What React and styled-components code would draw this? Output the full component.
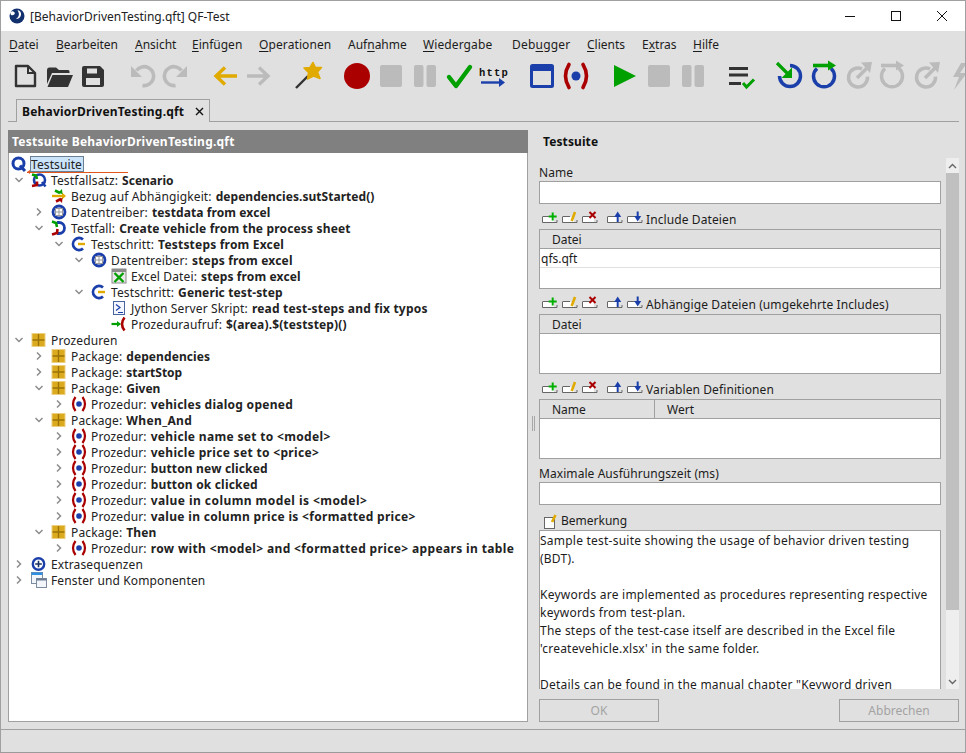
import React from 'react';
import styled, { createGlobalStyle } from 'styled-components';

const Global = createGlobalStyle`
  html, body { margin: 0; padding: 0; background: #e0e0e0; }
  body { font-family: "Noto Sans", "Open Sans", sans-serif; font-size: 12px; color: #1c1c1c; }
  * { box-sizing: border-box; }
`;

const BLUE = '#1a3faa';
const RED = '#aa0000';
const GREEN = '#00a000';
const GOLD = '#e0aa00';
const GRAY = '#bbbbbb';
const DARK = '#333333';

const Win = styled.div`
  position: relative; width: 966px; height: 753px; overflow: hidden; display: flex; flex-direction: column;
  background: #e0e0e0; border: 1px solid #a0a0a0; border-bottom-color: #9a9a9a;
`;
const TitleBar = styled.div`height: 30px; background: #fff; display: flex; align-items: center; padding-left: 8px; flex: none;`;
const TitleText = styled.div`margin-left: 5px; font-size: 12px; color: #222; flex: 1;`;
const WinBtn = styled.div`width: 46px; height: 30px; display: flex; align-items: center; justify-content: center;`;
const MenuBar = styled.div`height: 27px; display: flex; align-items: center; padding-left: 8px; flex: none;`;
const MenuItem = styled.div`
  width: ${p => p.$w}px; line-height: 18px; color: #1c1c1c; flex: none; white-space: nowrap; letter-spacing: ${p => p.$sp || 0}px;
  u { text-underline-offset: 2px; }
`;
const ToolBar = styled.div`height: 39px; display: flex; padding-left: 7px; flex: none; overflow: hidden;`;
const ToolSlot = styled.div`width: 34px; height: 39px; flex: none; svg { display: block; }`;
const ToolGap = styled.div`width: ${p => p.$w || 15}px; flex: none;`;
const TabStrip = styled.div`
  height: 23px; margin: 2px 6px 0 7px; padding-left: 8px; display: flex; flex: none; border-bottom: 1px solid #a0a0a0;
`;
const Tab = styled.div`
  width: 194px; height: 23px; border: 1px solid #a0a0a0; border-bottom: none; padding: 0 5px; display: flex; align-items: center;
  justify-content: space-between; font-weight: 700; color: #111; background: #e0e0e0; letter-spacing: 0.2px;
`;
const Content = styled.div`flex: 1; display: flex; padding: 8px 6px 0 7px; min-height: 0;`;
const LeftPanel = styled.div`width: 520px; height: 592px; display: flex; flex-direction: column; border: 1px solid #a0a0a0; background: #fff; flex: none;`;
const PanelHead = styled.div`
  height: 23px; background: #808080; color: #fff; font-weight: 700; display: flex; align-items: center; padding-left: 4px; margin: -1px -1px 0; flex: none; letter-spacing: 0.23px;
`;
const Tree = styled.div`position: relative; padding-top: 3px; flex: 1;`;
const Row = styled.div`
  height: 16px; display: flex; align-items: center; white-space: nowrap; color: #222; letter-spacing: 0.13px;
  padding-left: ${p => (p.$level === 0 ? 2 : (p.$level - 1) * 20)}px;
`;
const Bold = styled.b`font-weight: 700; margin-left: 4px; letter-spacing: ${p => p.$sp}px;`;
const Twisty = styled.div`width: 22px; height: 16px; flex: none; display: flex; align-items: center; justify-content: center; padding-right: 2px;`;
const NodeIcon = styled.div`width: 16px; height: 16px; flex: none; margin-right: 4px; svg { display: block; }`;
const Selected = styled.span`
  background: #cbe4fa; border: 1px solid #6b7f93; line-height: 15px; height: 16px; padding: 0 1px 0 0; margin-left: -1px; display: inline-block; letter-spacing: 0.1px;
`;
const DropMark = styled.div`
  position: absolute; left: 18px; top: 19px; width: 101px; height: 1px; background: #e0561c;
  &::before { content: ''; position: absolute; left: 0; top: -2px; border: 2.5px solid transparent; border-right: 3px solid #e0561c; border-left: none; }
`;
const Splitter = styled.div`width: 11px; flex: none; display: flex; align-items: center; justify-content: center; gap: 1px; padding-bottom: 14px;`;
const Grip = styled.div`width: 1px; height: 15px; background: #a8a8a8; margin-top: 1px;`;
const RightPanel = styled.div`width: 420px; flex: none; display: flex; flex-direction: column; height: 592px;`;
const RightHead = styled.div`height: 23px; padding-left: 4px; display: flex; align-items: center; font-weight: 700; color: #111; flex: none; letter-spacing: 0.1px;`;
const Scroller = styled.div`height: 531px; margin-top: 5px; display: flex; justify-content: space-between; flex: none;`;
const Form = styled.div`width: 402px; height: 531px; overflow: hidden; display: flex; flex-direction: column;`;
const FieldLabel = styled.div`height: 23px; display: flex; align-items: flex-end; line-height: 17px; flex: none; letter-spacing: 0.07px;`;
const Input = styled.div`height: 23px; background: #fff; border: 1px solid #a0a0a0; flex: none;`;
const TableBar = styled.div`height: 25px; display: flex; align-items: flex-start; flex: none; padding: 2px 0 0 3px;`;
const MiniBtn = styled.div`width: 20px; height: 18px; flex: none; margin-right: ${p => (p.$sep ? 5 : 0)}px; margin-top: 1px; svg { display: block; }`;
const BarText = styled.div`line-height: 18px; margin: 5px 0 0 -1px; letter-spacing: 0.1px;`;
const Table = styled.div`height: 60px; border: 1px solid #a0a0a0; background: #fff; display: flex; flex-direction: column; flex: none;`;
const THead = styled.div`height: 19px; background: #e0e0e0; border-bottom: 1px solid #a0a0a0; display: flex; flex: none;`;
const THCell = styled.div`
  width: ${p => p.$w}; padding-left: 12px; line-height: 20px; height: 18px; border-right: ${p => (p.$divider ? '1px solid #a0a0a0' : 'none')};
`;
const TRow = styled.div`height: 19px; border-bottom: 1px solid #e0e0e0; line-height: 20px; padding: 0 0 0 1px;`;
const Note = styled.div`flex: none; background: #fff; border: 1px solid #a0a0a0; padding: 1px 0 0 0; line-height: 18px; height: 200px; white-space: nowrap; letter-spacing: 0.23px;`;
const NoteLabel = styled.div`height: 25px; display: flex; align-items: flex-end; padding-left: 4px; gap: 2px; line-height: 18px; flex: none;`;
const ScrollBar = styled.div`width: 13px; height: 531px; background: #eeeeee; display: flex; flex-direction: column; flex: none;`;
const ScrollBtn = styled.div`height: 15px; display: flex; align-items: center; justify-content: center; flex: none;`;
const Thumb = styled.div`height: 437px; background: #c0c0c0; flex: none;`;
const ScrollGap = styled.div`flex: 1;`;
const ButtonRow = styled.div`display: flex; justify-content: space-between; margin-top: 10px; flex: none;`;
const Btn = styled.div`width: 120px; height: 23px; border: 1px solid #a0a0a0; color: #a3a3a3; display: flex; align-items: center; justify-content: center; line-height: 18px;`;
const StatusBar = styled.div`height: 23px; border-top: 1px solid #a0a0a0; flex: none;`;

const Ico = ({ children }) => <svg width="34" height="39" viewBox="0 0 34 39" fill="none">{children}</svg>;

const RingIn = ({ c, a }) => (
  <Ico>
    <path d="M17 7.500A10.500 10.500 0 1 1 6.500 18" stroke={c} strokeWidth="3.500" fill="none" />
    <path d="M4 5L16 17" stroke={a} strokeWidth="3.200" />
    <path d="M19 9.500V20H8.500z" fill={a} />
  </Ico>
);
const RingOver = ({ c, a }) => (
  <Ico>
    <path d="M10 10.500A10.500 10.500 0 1 0 24 10.500" stroke={c} strokeWidth="3.500" fill="none" />
    <path d="M6 7.500H22" stroke={a} strokeWidth="3.600" />
    <path d="M21 2.500L29 7.500L21 12.500z" fill={a} />
  </Ico>
);
const RingOut = ({ c }) => (
  <Ico>
    <path d="M21 10.900A9.500 9.500 0 1 0 26.500 18.700" stroke={c} strokeWidth="3.500" fill="none" />
    <path d="M16 20L26 10" stroke={c} strokeWidth="3.500" />
    <path d="M20 4.500L31 4L29 15z" fill={c} />
  </Ico>
);

const tools = [
  <Ico><path d="M8 8H20L27 15V28H8z" stroke={DARK} strokeWidth="2.400" strokeLinejoin="round" /><path d="M20 8V15H27" stroke={DARK} strokeWidth="2" /></Ico>,
  <Ico><path d="M5 12Q5 9.500 7 9.500H14L17 12H26Q27.500 12 27.500 13.500V15H10L5 26z" fill={DARK} /><path d="M10.500 17H31L26 29H5.500z" fill={DARK} /></Ico>,
  <Ico><path d="M6 10Q6 8 8 8H24L28 12V27Q28 29 26 29H8Q6 29 6 27z" fill={DARK} /><rect x="11" y="10.500" width="10" height="5" fill="#e0e0e0" /><rect x="10" y="20" width="14" height="7" fill="#e0e0e0" /></Ico>,
  null,
  <Ico><path d="M11.500 12.500A9.500 9.500 0 1 1 17.500 27.500" stroke={GRAY} strokeWidth="3.600" /><path d="M6 8V19H17z" fill={GRAY} /></Ico>,
  <Ico><path d="M22.500 12.500A9.500 9.500 0 1 0 16.500 27.500" stroke={GRAY} strokeWidth="3.600" /><path d="M28 8V19H17z" fill={GRAY} /></Ico>,
  null,
  <Ico><path d="M29 18H9M17 9.500L8 18L17 26.500" stroke={GOLD} strokeWidth="3.400" /></Ico>,
  <Ico><path d="M5 18H25M17 9.500L26 18L17 26.500" stroke={GRAY} strokeWidth="3.400" /></Ico>,
  null,
  <Ico><path d="M5 30L17 18" stroke={DARK} strokeWidth="2.400" /><path d="M22 4.500L24.500 9.500L30.500 9.500L26.500 14L29 20.500L22.500 18L16.500 21L17.500 14.500L13 10L19 9.500z" fill={GOLD} stroke={GOLD} strokeWidth="1.500" strokeLinejoin="round" /></Ico>,
  null,
  <Ico><circle cx="17" cy="18" r="13" fill={RED} /></Ico>,
  <Ico><rect x="6" y="7" width="22" height="22" rx="2" fill={GRAY} /></Ico>,
  <Ico><rect x="6" y="7" width="9.500" height="22" rx="2" fill={GRAY} /><rect x="18.500" y="7" width="9.500" height="22" rx="2" fill={GRAY} /></Ico>,
  <Ico><path d="M7 19L14 28L28 9" stroke={GREEN} strokeWidth="4.400" strokeLinecap="round" strokeLinejoin="round" /></Ico>,
  <Ico><text x="3" y="17.500" fontFamily="Liberation Mono" fontWeight="700" fontSize="10.500" letterSpacing="1.200" fill="#111">http</text><path d="M5 24.500H24" stroke={BLUE} strokeWidth="2.400" /><path d="M23 20L29 24.500L23 29z" fill={BLUE} /></Ico>,
  null,
  <Ico><rect x="6.500" y="7.500" width="21" height="21" stroke={BLUE} strokeWidth="3" rx="1" /><rect x="6" y="7" width="22" height="6" fill={BLUE} /></Ico>,
  <Ico><path d="M10 6.500Q3 18 10 29.500M24 6.500Q31 18 24 29.500" stroke={RED} strokeWidth="3.600" strokeLinecap="round" /><circle cx="17" cy="18" r="4.500" fill={BLUE} /></Ico>,
  null,
  <Ico><path d="M6 7L28 18L6 29z" fill={GREEN} /></Ico>,
  <Ico><rect x="6" y="7" width="22" height="22" rx="2" fill={GRAY} /></Ico>,
  <Ico><rect x="6" y="7" width="9.500" height="22" rx="2" fill={GRAY} /><rect x="18.500" y="7" width="9.500" height="22" rx="2" fill={GRAY} /></Ico>,
  null,
  <Ico><path d="M4 10.500H23M4 17H23" stroke={DARK} strokeWidth="3" /><path d="M4 25.500H16" stroke={DARK} strokeWidth="3" /><path d="M18 25L21.500 29L29 21.500" stroke={GREEN} strokeWidth="3" /></Ico>,
  null,
  <RingIn c={BLUE} a={GREEN} />,
  <RingOver c={BLUE} a={GREEN} />,
  <RingOut c={GRAY} />,
  <RingOver c={GRAY} a={GRAY} />,
  <RingOut c={GRAY} />,
  <Ico><path d="M18 5L10 19H16L11 32L24 15H17L24 5z" fill={GRAY} /></Ico>,
];

const S = ({ children }) => <svg width="16" height="16" viewBox="0 0 16 16" fill="none">{children}</svg>;
const I = {
  suite: <S><circle cx="7.500" cy="7.500" r="5.500" stroke={BLUE} strokeWidth="3" /><path d="M9 9.500L14 15" stroke={BLUE} strokeWidth="3" /></S>,
  scenario: <S><circle cx="8.500" cy="8" r="5.500" stroke={BLUE} strokeWidth="2.600" /><path d="M11 10L14.500 14.500" stroke={BLUE} strokeWidth="2.500" /><path d="M1 2.500L5 3.500L6 7" stroke={GREEN} strokeWidth="2.600" /><path d="M1 14L6 13V9.500" stroke={RED} strokeWidth="2.600" /></S>,
  dep: <S><path d="M1 8H12" stroke={GOLD} strokeWidth="2.400" /><path d="M4 2.500L9 5" stroke={GREEN} strokeWidth="2.600" /><path d="M5 13.500L10 11" stroke={RED} strokeWidth="2.600" /><path d="M11 4.500L15 8L11 11.500z" fill={GOLD} /><path d="M11 1L11.500 6L7 5z" fill={GREEN} /><path d="M11 15L11.500 10L7 11z" fill={RED} /></S>,
  driver: <S><circle cx="8" cy="8" r="6" stroke={BLUE} strokeWidth="2.800" /><rect x="4.500" y="4.500" width="7" height="7" fill="#fff" stroke="#9a9a9a" /><path d="M8 4.500V11.500M4.500 8H11.500" stroke="#9a9a9a" /></S>,
  testcase: <S><path d="M6 2.500H8A5.500 5.500 0 0 1 8 13.500H6" stroke={BLUE} strokeWidth="2.800" /><path d="M1 1.500L5 3L6 7" stroke={GREEN} strokeWidth="2.600" /><path d="M1 14.500L6 13L6.500 9" stroke={RED} strokeWidth="2.600" /></S>,
  step: <S><path d="M12 3.500A6 6 0 1 0 12 12.500" stroke={BLUE} strokeWidth="2.800" /><path d="M7 8H14" stroke={GOLD} strokeWidth="2.400" /></S>,
  excel: <S><rect x="1" y="1" width="14" height="14" fill="#e8e8e8" stroke="#8a8a8a" /><rect x="1" y="1" width="14" height="3" fill="#8a8a8a" /><path d="M3.500 5L12.500 14M12.500 5L3.500 14" stroke={GREEN} strokeWidth="2.400" /></S>,
  script: <S><rect x="2.500" y="1.500" width="11" height="13" fill="#f4f7ff" stroke="#48649c" /><path d="M5 4.500L9 7.500L5 10.500" stroke={BLUE} strokeWidth="1.200" /><path d="M7 12.500H12" stroke={BLUE} /></S>,
  call: <S><path d="M0.500 8H7" stroke={GREEN} strokeWidth="2.200" /><path d="M6 5L10 8L6 11z" fill={GREEN} /><path d="M13.500 1.500Q8.500 8 13.500 14.500" stroke={RED} strokeWidth="2.600" /></S>,
  pack: <S><rect x="1" y="1.500" width="13" height="13" fill="#dcaa1e" stroke="#eccf80" /><path d="M7.500 2V14M1.500 8H13.500" stroke="#9a7408" strokeWidth="1.400" /></S>,
  proc: <S><path d="M4.500 1Q-0.500 8 4.500 15M11.500 1Q16.500 8 11.500 15" stroke={RED} strokeWidth="2.200" /><circle cx="8" cy="8" r="2.800" fill={BLUE} /></S>,
  extra: <S><circle cx="7.500" cy="8" r="5.700" fill="#fff" stroke={BLUE} strokeWidth="2.400" /><path d="M7.500 4.700V11.300M4.200 8H10.800" stroke="#1a3060" strokeWidth="1.600" /></S>,
  windows: <S><rect x="0.500" y="0.500" width="11" height="11" fill="#f2f5fa" stroke="#7d8ba0" /><rect x="0.500" y="0.500" width="11" height="2.500" fill="#2f8fe0" /><rect x="5.500" y="6.500" width="10" height="9" fill="#f2f5fa" stroke="#7d8ba0" /><rect x="5.500" y="6.500" width="10" height="2" fill="#6a7a90" /></S>,
};

const nodes = [
  [1, 'd', 'scenario', 'Testfallsatz:', 'Scenario', 0],
  [2, '', 'dep', 'Bezug auf Abhängigkeit:', 'dependencies.sutStarted()', 0.04],
  [2, 'r', 'driver', 'Datentreiber:', 'testdata from excel', 0.1],
  [2, 'd', 'testcase', 'Testfall:', 'Create vehicle from the process sheet', 0.16],
  [3, 'd', 'step', 'Testschritt:', 'Teststeps from Excel', 0.2],
  [4, 'd', 'driver', 'Datentreiber:', 'steps from excel', 0.19],
  [5, '', 'excel', 'Excel Datei:', 'steps from excel', 0.12],
  [4, 'd', 'step', 'Testschritt:', 'Generic test-step', 0.12],
  [5, '', 'script', 'Jython Server Skript:', 'read test-steps and fix typos', 0.2],
  [5, '', 'call', 'Prozeduraufruf:', '$(area).$(teststep)()', 0.14],
  [1, 'd', 'pack', 'Prozeduren', '', 0],
  [2, 'r', 'pack', 'Package:', 'dependencies', 0.08],
  [2, 'r', 'pack', 'Package:', 'startStop', 0],
  [2, 'd', 'pack', 'Package:', 'Given', 0],
  [3, 'r', 'proc', 'Prozedur:', 'vehicles dialog opened', 0.27],
  [2, 'd', 'pack', 'Package:', 'When_And', 0.37],
  [3, 'r', 'proc', 'Prozedur:', 'vehicle name set to <model>', 0.33],
  [3, 'r', 'proc', 'Prozedur:', 'vehicle price set to <price>', 0.32],
  [3, 'r', 'proc', 'Prozedur:', 'button new clicked', 0.17],
  [3, 'r', 'proc', 'Prozedur:', 'button ok clicked', 0.18],
  [3, 'r', 'proc', 'Prozedur:', 'value in column model is <model>', 0.44],
  [3, 'r', 'proc', 'Prozedur:', 'value in column price is <formatted price>', 0.31],
  [2, 'd', 'pack', 'Package:', 'Then', 0.1],
  [3, 'r', 'proc', 'Prozedur:', 'row with <model> and <formatted price> appears in table', 0.36],
  [1, 'r', 'extra', 'Extrasequenzen', '', 0],
  [1, 'r', 'windows', 'Fenster und Komponenten', '', 0],
];

const Chevron = ({ dir }) => (
  <svg width="10" height="10" viewBox="0 0 10 10" fill="none">
    <path d={dir === 'd' ? 'M1.500 3L5 6.500L8.500 3' : 'M3 1.500L6.500 5L3 8.500'} stroke="#8c8c8c" strokeWidth="1.500" />
  </svg>
);

const MiniBase = () => <path d="M0.500 10V15.500H15V13M0.500 9.500H8" stroke="#666" />;
const mini = [
  <svg width="16" height="18" viewBox="0 0 16 18" fill="none"><path d="M1 10H12V15H1z" fill="#fff" /><MiniBase /><path d="M10.700 5.500V13.500M6.700 9.500H14.700" stroke="#00b000" strokeWidth="2" /></svg>,
  <svg width="16" height="18" viewBox="0 0 16 18" fill="none"><path d="M1 10H12V15H1z" fill="#fff" /><MiniBase /><path d="M13 5L9.700 14" stroke={GOLD} strokeWidth="2.600" /></svg>,
  <svg width="16" height="18" viewBox="0 0 16 18" fill="none"><path d="M1 10H12V15H1z" fill="#fff" /><MiniBase /><path d="M7.500 5L13.500 11M13.500 5L7.500 11" stroke={RED} strokeWidth="2" /></svg>,
  <svg width="16" height="18" viewBox="0 0 16 18" fill="none"><path d="M1 10H12V15H1z" fill="#fff" /><MiniBase /><path d="M10.700 9V15" stroke={BLUE} strokeWidth="2" /><path d="M10.700 4.500L14.200 10H7.200z" fill={BLUE} /></svg>,
  <svg width="16" height="18" viewBox="0 0 16 18" fill="none"><path d="M1 10H12V15H1z" fill="#fff" /><MiniBase /><path d="M10.700 4.500V10" stroke={BLUE} strokeWidth="2" /><path d="M10.700 14.500L14.200 9H7.200z" fill={BLUE} /></svg>,
];

const TableToolbar = ({ label }) => (
  <TableBar>
    {mini.map((m, i) => <MiniBtn key={i} $sep={i === 2}>{m}</MiniBtn>)}
    <BarText>{label}</BarText>
  </TableBar>
);

const menus = [
  [47, 0, 'D', 'atei'], [79, 0, 'B', 'earbeiten'], [57, 0, 'A', 'nsicht'], [67, 0, 'E', 'infügen'], [89, 0.1, 'O', 'perationen'],
  [75, 0, 'Auf', 'n', 'ahme'], [89, 0.1, 'W', 'iedergabe'], [75, 0.2, 'Deb', 'u', 'gger'], [55, 0, 'C', 'lients'], [51, 0, 'E', 'x', 'tras'], [40, 0, 'H', 'ilfe'],
];

export default function App() {
  return (
    <Win>
      <Global />
      <TitleBar>
        <svg width="16" height="16" viewBox="0 0 16 16"><circle cx="8" cy="8" r="7.500" fill="#12306e" /><path d="M1 4.500Q4 2 6 5Q5 8 2 7z" fill="#fff" /><path d="M8.500 2Q12 8 7 11Q11 11 12 7Q12.500 3 8.500 2z" fill="#fff" /></svg>
        <TitleText>[BehaviorDrivenTesting.qft] QF-Test</TitleText>
        <WinBtn><svg width="10" height="10"><path d="M0 5.500H10" stroke="#111" /></svg></WinBtn>
        <WinBtn><svg width="10" height="10"><rect x="0.500" y="0.500" width="9" height="9" fill="none" stroke="#111" /></svg></WinBtn>
        <WinBtn><svg width="10" height="10"><path d="M0 0L10 10M10 0L0 10" stroke="#111" /></svg></WinBtn>
      </TitleBar>
      <MenuBar>
        {menus.map(([w, sp, ...m], i) => (
          <MenuItem key={i} $w={w} $sp={sp}>
            {m.length === 2 ? <><u>{m[0]}</u>{m[1]}</> : <>{m[0]}<u>{m[1]}</u>{m[2]}</>}
          </MenuItem>
        ))}
      </MenuBar>
      <ToolBar>
        {tools.map((t, i) => (t ? <ToolSlot key={i}>{t}</ToolSlot> : <ToolGap key={i} $w={i === 26 ? 14 : 15} />))}
      </ToolBar>
      <TabStrip>
        <Tab>
          BehaviorDrivenTesting.qft
          <svg width="9" height="9"><path d="M1 1L8 8M8 1L1 8" stroke="#111" strokeWidth="1.400" /></svg>
        </Tab>
      </TabStrip>
      <Content>
        <LeftPanel>
          <PanelHead>Testsuite BehaviorDrivenTesting.qft</PanelHead>
          <Tree>
            <Row $level={0}>
              <NodeIcon>{I.suite}</NodeIcon>
              <Selected>Testsuite</Selected>
            </Row>
            <DropMark />
            {nodes.map(([lv, tw, ic, label, bold, sp], i) => (
              <Row key={i} $level={lv}>
                <Twisty>{tw && <Chevron dir={tw} />}</Twisty>
                <NodeIcon>{I[ic]}</NodeIcon>
                {label}
                {bold && <Bold $sp={sp}>{bold}</Bold>}
              </Row>
            ))}
          </Tree>
        </LeftPanel>
        <Splitter><Grip /><Grip /></Splitter>
        <RightPanel>
          <RightHead>Testsuite</RightHead>
          <Scroller>
            <Form>
              <FieldLabel>Name</FieldLabel>
              <Input />
              <TableToolbar label="Include Dateien" />
              <Table>
                <THead><THCell $w="100%">Datei</THCell></THead>
                <TRow>qfs.qft</TRow>
              </Table>
              <TableToolbar label="Abhängige Dateien (umgekehrte Includes)" />
              <Table>
                <THead><THCell $w="100%">Datei</THCell></THead>
              </Table>
              <TableToolbar label="Variablen Definitionen" />
              <Table>
                <THead>
                  <THCell $w="115px" $divider>Name</THCell>
                  <THCell $w="285px">Wert</THCell>
                </THead>
              </Table>
              <FieldLabel>Maximale Ausführungszeit (ms)</FieldLabel>
              <Input />
              <NoteLabel>
                <svg width="16" height="16" viewBox="0 0 16 16" fill="none"><rect x="1.500" y="3.500" width="10" height="11" fill="#fff" stroke="#666" /><path d="M12.500 1L9 8" stroke={GOLD} strokeWidth="2.600" /></svg>
                Bemerkung
              </NoteLabel>
              <Note>
                Sample test-suite showing the usage of behavior driven testing<br />
                (BDT).<br /><br />
                Keywords are implemented as procedures representing respective<br />
                keywords from test-plan.<br />
                The steps of the test-case itself are described in the Excel file<br />
                'createvehicle.xlsx' in the same folder.<br /><br />
                Details can be found in the manual chapter "Keyword driven
              </Note>
            </Form>
            <ScrollBar>
              <ScrollBtn><svg width="9" height="6"><path d="M1 5L4.500 1.500L8 5" fill="none" stroke="#666" strokeWidth="1.400" /></svg></ScrollBtn>
              <Thumb />
              <ScrollGap />
              <ScrollBtn><svg width="9" height="6"><path d="M1 1L4.500 4.500L8 1" fill="none" stroke="#666" strokeWidth="1.400" /></svg></ScrollBtn>
            </ScrollBar>
          </Scroller>
          <ButtonRow>
            <Btn>OK</Btn>
            <Btn>Abbrechen</Btn>
          </ButtonRow>
        </RightPanel>
      </Content>
      <StatusBar />
    </Win>
  );
}
